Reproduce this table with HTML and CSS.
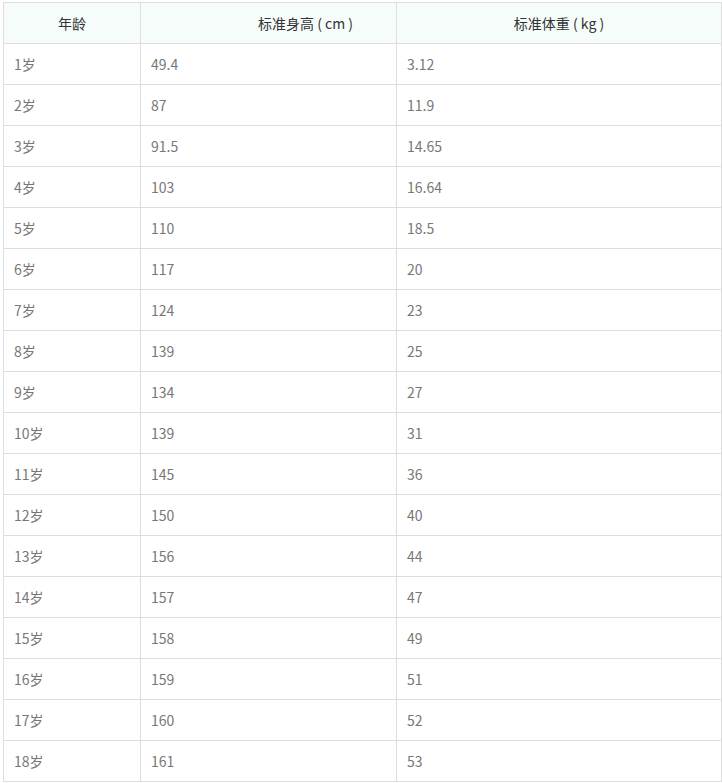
FILE: index.html
```html
<!DOCTYPE html>
<html lang="zh">
<head>
<meta charset="utf-8">
<link rel="stylesheet" href="styles.css">
</head>
<body>
<table class="data">
<colgroup><col class="c1"><col class="c2"><col class="c3"></colgroup>
<thead>
<tr><th>年龄</th><th class="shift">标准身高 ( cm )</th><th>标准体重 ( kg )</th></tr>
</thead>
<tbody>
<tr><td>1岁</td><td>49.4</td><td>3.12</td></tr>
<tr><td>2岁</td><td>87</td><td>11.9</td></tr>
<tr><td>3岁</td><td>91.5</td><td>14.65</td></tr>
<tr><td>4岁</td><td>103</td><td>16.64</td></tr>
<tr><td>5岁</td><td>110</td><td>18.5</td></tr>
<tr><td>6岁</td><td>117</td><td>20</td></tr>
<tr><td>7岁</td><td>124</td><td>23</td></tr>
<tr><td>8岁</td><td>139</td><td>25</td></tr>
<tr><td>9岁</td><td>134</td><td>27</td></tr>
<tr><td>10岁</td><td>139</td><td>31</td></tr>
<tr><td>11岁</td><td>145</td><td>36</td></tr>
<tr><td>12岁</td><td>150</td><td>40</td></tr>
<tr><td>13岁</td><td>156</td><td>44</td></tr>
<tr><td>14岁</td><td>157</td><td>47</td></tr>
<tr><td>15岁</td><td>158</td><td>49</td></tr>
<tr><td>16岁</td><td>159</td><td>51</td></tr>
<tr><td>17岁</td><td>160</td><td>52</td></tr>
<tr><td>18岁</td><td>161</td><td>53</td></tr>
</tbody>
</table>
</body>
</html>
```
FILE: styles.css
```css
html, body {
  margin: 0;
  background: #fff;
}
body {
  padding: 2px 0 0 3px;
  font-family: "Noto Sans CJK SC", "Microsoft YaHei", sans-serif;
  font-size: 14px;
}
.data {
  border-collapse: collapse;
  table-layout: fixed;
  width: 718px;
}
.c1 { width: 137px; }
.c2 { width: 256px; }
.c3 { width: 325px; }
.data th, .data td {
  border: 1px solid #dddddd;
  height: 41px;
  padding: 0 10px;
  box-sizing: border-box;
  vertical-align: middle;
  line-height: 20px;
}
.data th {
  background: #f5fcfa;
  color: #333;
  font-weight: normal;
  text-align: center;
  white-space: pre;
}
.data th.shift {
  padding-left: 84px;
}
.data td {
  color: #777;
  text-align: left;
}
```
